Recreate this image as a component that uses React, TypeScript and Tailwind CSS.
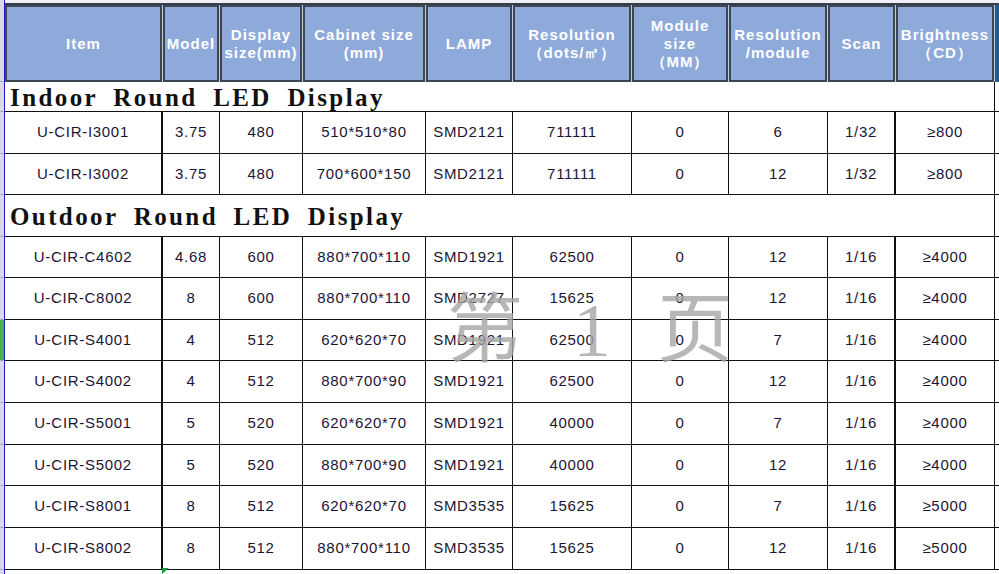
import React from "react";

const widths = [
  "w-[158px]",
  "w-[57px]",
  "w-[83px]",
  "w-[123px]",
  "w-[87px]",
  "w-[119px]",
  "w-[97px]",
  "w-[99px]",
  "w-[68px]",
  "w-[99px]",
];

const headers = [
  ["Item"],
  ["Model"],
  ["Display", "size(mm)"],
  ["Cabinet size", "(mm)"],
  ["LAMP"],
  ["Resolution", "（dots/㎡）"],
  ["Module", "size", "（MM）"],
  ["Resolution", "/module"],
  ["Scan"],
  ["Brightness", "（CD）"],
];

type Row = { title?: string; cells?: string[]; h: string };

const rows: Row[] = [
  { title: "Indoor Round LED Display", h: "h-[30px]" },
  { cells: ["U-CIR-I3001", "3.75", "480", "510*510*80", "SMD2121", "711111", "0", "6", "1/32", "≥800"], h: "h-[42px]" },
  { cells: ["U-CIR-I3002", "3.75", "480", "700*600*150", "SMD2121", "711111", "0", "12", "1/32", "≥800"], h: "h-[41px]" },
  { title: "Outdoor Round LED Display", h: "h-[42px]" },
  { cells: ["U-CIR-C4602", "4.68", "600", "880*700*110", "SMD1921", "62500", "0", "12", "1/16", "≥4000"], h: "h-[41px]" },
  { cells: ["U-CIR-C8002", "8", "600", "880*700*110", "SMD2727", "15625", "0", "12", "1/16", "≥4000"], h: "h-[42px]" },
  { cells: ["U-CIR-S4001", "4", "512", "620*620*70", "SMD1921", "62500", "0", "7", "1/16", "≥4000"], h: "h-[41px]" },
  { cells: ["U-CIR-S4002", "4", "512", "880*700*90", "SMD1921", "62500", "0", "12", "1/16", "≥4000"], h: "h-[42px]" },
  { cells: ["U-CIR-S5001", "5", "520", "620*620*70", "SMD1921", "40000", "0", "7", "1/16", "≥4000"], h: "h-[42px]" },
  { cells: ["U-CIR-S5002", "5", "520", "880*700*90", "SMD1921", "40000", "0", "12", "1/16", "≥4000"], h: "h-[41px]" },
  { cells: ["U-CIR-S8001", "8", "512", "620*620*70", "SMD3535", "15625", "0", "7", "1/16", "≥5000"], h: "h-[42px]" },
  { cells: ["U-CIR-S8002", "8", "512", "880*700*110", "SMD3535", "15625", "0", "12", "1/16", "≥5000"], h: "h-[42px]" },
];

const Gutter = () => (
  <div className="w-[5px] shrink-0 flex flex-col bg-[#d9d9e1] border-r border-[#1c1cc8]">
    <div className="h-[82px] border-b border-[#a9a9b3]" />
    {rows.map((r, i) => (
      <div
        key={i}
        className={`${r.h} border-b border-[#a9a9b3] ${i === 6 ? "bg-[#4caf50]" : ""}`}
      />
    ))}
  </div>
);

const Header = () => (
  <div className="h-[82px] pt-[3px] bg-[#eef0f4]">
    <div className="flex h-[79px] border-t-2 border-[#363e4b] bg-[#c3cbd9]">
      {headers.map((lines, i) => (
        <div key={i} className={`${widths[i]} h-full pr-px`}>
          <div className="h-full border-2 border-[#3e4654] bg-[#8eaadb] flex flex-col items-center justify-center text-white font-bold text-[15px] leading-[18px] tracking-[1px] whitespace-nowrap">
            {lines.map((l) => (
              <span key={l}>{l}</span>
            ))}
          </div>
        </div>
      ))}
      <div className="flex-1 bg-[#245b8f]" />
    </div>
  </div>
);

export default function App() {
  return (
    <div
      className="relative w-[999px] h-[574px] overflow-hidden bg-white flex"
      style={{ fontFamily: '"Liberation Sans", Arial, sans-serif' }}
    >
      <Gutter />
      <div className="flex-1 flex flex-col">
        <Header />
        {rows.map((r, i) =>
          r.title ? (
            <div key={i} className={`${r.h} flex border-b border-[#111]`}>
              <div
                className="w-[990px] border-r border-[#111] flex items-center pl-[5px] pt-[2px] text-[25px] leading-none font-bold tracking-[2.4px] [word-spacing:7px] text-[#111] whitespace-nowrap"
                style={{ fontFamily: '"Liberation Serif", "Times New Roman", serif' }}
              >
                {r.title}
              </div>
              <div className="flex-1" />
            </div>
          ) : (
            <div key={i} className={`${r.h} flex border-b border-[#111]`}>
              {r.cells!.map((c, j) => (
                <div
                  key={j}
                  className={`${widths[j]} ${j === 0 || j === 8 ? "border-r-2" : "border-r"} border-[#111] flex items-center justify-center text-[15px] tracking-[0.7px] text-[#1c1436] whitespace-nowrap`}
                >
                  {c}
                </div>
              ))}
              <div className="flex-1" />
            </div>
          )
        )}
      </div>

      {/* page watermark */}
      <div
        className="absolute left-[447px] top-[292px] flex items-baseline text-[76px] leading-none text-[#a6a6a6] opacity-80 pointer-events-none"
        style={{ fontFamily: '"Liberation Serif", "Noto Sans CJK SC", serif' }}
      >
        <span>第</span>
        <span className="ml-[50px]">1</span>
        <span className="ml-[46px]">页</span>
      </div>

      {/* cell marker */}
      <div className="absolute left-[162px] top-[568px] w-0 h-0 border-r-[7px] border-r-transparent border-t-[6px] border-t-[#1e9a3c]" />
    </div>
  );
}
